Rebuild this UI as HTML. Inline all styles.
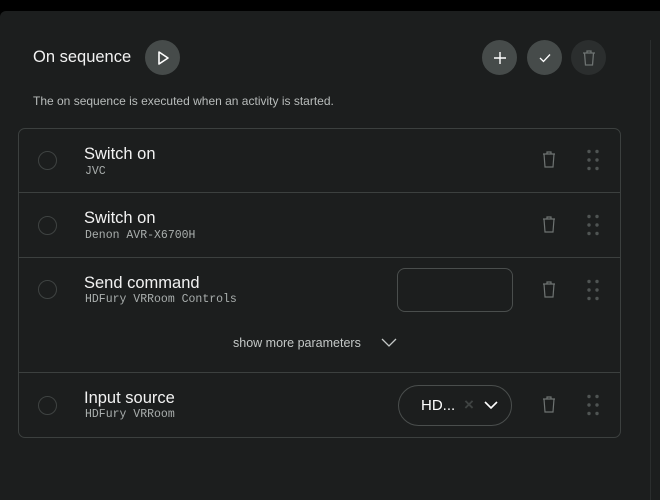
<!DOCTYPE html>
<html><head><style>
*{margin:0;padding:0;box-sizing:border-box}
html,body{width:660px;height:500px;overflow:hidden}
body{background:#000;font-family:"Liberation Sans",sans-serif;position:relative}
.panel{position:absolute;left:0;top:11px;width:660px;height:489px;background:#1c1e1e;border-top-left-radius:6px;overflow:hidden}
.vline{position:absolute;left:650px;top:29px;width:1px;height:460px;background:#2b2e2e}
.abs{position:absolute}
.btn{position:absolute;width:35px;height:35px;border-radius:50%;background:#464b4a;display:flex;align-items:center;justify-content:center}
.card{position:absolute;left:18px;top:128px;width:603px;height:310px;border:1px solid #3c403f;border-radius:7px}
.sep{position:absolute;left:0;width:601px;height:1px;background:#3c403f}
.radio{position:absolute;left:19px;width:19px;height:19px;border:1.5px solid #3f4342;border-radius:50%}
.t{position:absolute;left:65px;color:#f2f2f2;font-size:16.5px}
.s{position:absolute;left:66px;color:#a9aead;font-family:"Liberation Mono",monospace;font-size:11.5px}
</style></head><body>
<div class="panel">
<div class="vline"></div>
</div>
<div class="abs" style="left:33px;top:48px;color:#f2f2f2;font-size:16.5px">On sequence</div>
<div class="btn" style="left:145px;top:40px"><svg width="14" height="16" viewBox="0 0 14 16"><path d="M3 2 L12 8 L3 14 Z" fill="none" stroke="#fff" stroke-width="1.6" stroke-linejoin="round"/></svg></div>
<div class="btn" style="left:482px;top:40px"><svg width="16" height="16"><path d="M8 2V14M2 8H14" stroke="#fff" stroke-width="1.4"/></svg></div>
<div class="btn" style="left:527px;top:40px"><svg width="14" height="12"><path d="M2 6L5.5 9.5L12 2.5" fill="none" stroke="#fff" stroke-width="1.3"/></svg></div>
<div class="btn" style="left:571px;top:40px;background:#2b2e2e"><svg width="14" height="18" viewBox="0 0 14 18"><path d="M1 4H13M5 4V2H9V4M2.5 4L3.5 16H10.5L11.5 4" fill="none" stroke="#6e7372" stroke-width="1.3"/></svg></div>
<div class="abs" style="left:33px;top:94px;color:#b8bcbb;font-size:12px">The on sequence is executed when an activity is started.</div>

<div class="card">
 <div class="sep" style="top:63px"></div>
 <div class="sep" style="top:128px"></div>
 <div class="sep" style="top:243px"></div>

 <div class="radio" style="top:22px"></div>
 <div class="t" style="top:16px">Switch on</div>
 <div class="s" style="top:36px">JVC</div>

 <div class="radio" style="top:87px"></div>
 <div class="t" style="top:80px">Switch on</div>
 <div class="s" style="top:100px">Denon AVR-X6700H</div>

 <div class="radio" style="top:151px"></div>
 <div class="t" style="top:145px">Send command</div>
 <div class="s" style="top:164px">HDFury VRRoom Controls</div>
 <div class="abs" style="left:378px;top:139px;width:116px;height:44px;border:1px solid #4a4e4d;border-radius:8px"></div>
 <div class="abs" style="left:214px;top:207px;color:#c4c8c7;font-size:12.5px">show more parameters</div>
 <svg class="abs" style="left:362px;top:209px" width="16" height="10"><path d="M1 1L8 8L15 1" fill="none" stroke="#c4c8c7" stroke-width="1.3"/></svg>

 <div class="radio" style="top:267px"></div>
 <div class="t" style="top:260px">Input source</div>
 <div class="s" style="top:279px">HDFury VRRoom</div>
 <div class="abs" style="left:379px;top:256px;width:114px;height:41px;border:1px solid #4a4e4d;border-radius:21px"></div>
 <div class="abs" style="left:402px;top:268px;color:#fff;font-size:15px">HD...</div>
 <div class="abs" style="left:445px;top:266px;color:#3f4342;font-size:17px;font-weight:bold">×</div>
 <svg class="abs" style="left:465px;top:272px" width="14" height="9"><path d="M1 1L7 7L13 1" fill="none" stroke="#fff" stroke-width="1.6"/></svg>
</div>

<svg class="abs" style="left:0;top:0" width="660" height="500">
<defs>
<g id="tr"><path d="M-6 -6H6M-2 -6V-8H2V-6M-5 -6L-4 7H4L5 -6" fill="none" stroke="#6e7372" stroke-width="1.2"/></g>
<g id="dt" fill="#4f5453"><circle cx="-4" cy="-8.5" r="1.7"/><circle cx="4" cy="-8.5" r="1.7"/><circle cx="-4" cy="0" r="1.7"/><circle cx="4" cy="0" r="1.7"/><circle cx="-4" cy="8.5" r="1.7"/><circle cx="4" cy="8.5" r="1.7"/></g>
</defs>
<use href="#tr" x="549" y="160"/><use href="#dt" x="593" y="160"/>
<use href="#tr" x="549" y="225"/><use href="#dt" x="593" y="225"/>
<use href="#tr" x="549" y="290"/><use href="#dt" x="593" y="290"/>
<use href="#tr" x="549" y="405"/><use href="#dt" x="593" y="405"/>
</svg>
</body></html>
